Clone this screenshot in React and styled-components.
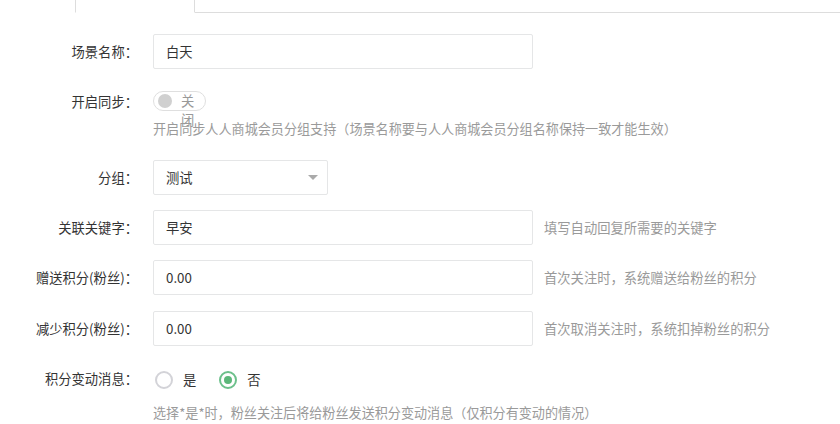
import React from "react";
import styled, { createGlobalStyle } from "styled-components";

const GlobalStyle = createGlobalStyle`
	body {
		margin: 0;
		background: #fff;
		font-family: "Noto Sans CJK SC", "Noto Sans", sans-serif;
		font-size: 13.3px;
		color: #333;
	}
`;

const Page = styled.div`
	width: 840px;
	height: 424px;
	overflow: hidden;
`;

const TabBar = styled.div`
	display: flex;
	height: 12px;
	border-bottom: 1px solid #ddd;
`;

const Tab = styled.div`
	box-sizing: border-box;
	width: ${(p) => p.w}px;
	height: 13px;
	background: #fff;
	border: ${(p) => (p.active ? "1px solid #ddd" : "none")};
	border-top: none;
	border-bottom: ${(p) => (p.active ? "1px solid #fff" : "none")};
`;

const Form = styled.div`
	padding-top: 21px;
`;

const Row = styled.div`
	display: flex;
	margin-bottom: ${(p) => p.mb ?? 15}px;
`;

const Label = styled.div`
	width: 138px;
	flex-shrink: 0;
	margin-right: 15px;
	text-align: right;
	padding-top: 7px;
	line-height: 21px;
	color: #333;
	white-space: nowrap;
`;

const Field = styled.div`
	display: flex;
	flex-direction: ${(p) => (p.column ? "column" : "row")};
	align-items: ${(p) => (p.column ? "flex-start" : "center")};
`;

const Input = styled.input`
	box-sizing: border-box;
	width: ${(p) => p.w || 380}px;
	height: 35px;
	border: 1px solid #e5e6e7;
	border-radius: 2px;
	padding: 0 12px;
	font-family: inherit;
	font-size: 13.3px;
	color: #333;
	outline: none;
`;

const Help = styled.div`
	color: #9a9a9a;
	line-height: 20px;
	font-size: ${(p) => p.fs || 13.3}px;
	margin-left: ${(p) => p.ml || 0}px;
	margin-top: ${(p) => p.mt || 0}px;
	white-space: nowrap;
`;

const Switch = styled.div`
	box-sizing: border-box;
	display: flex;
	align-items: flex-start;
	width: 53px;
	height: 20px;
	margin-top: 7px;
	border: 1px solid #dfdfdf;
	border-radius: 10px;
	padding-left: 4px;
`;

const Knob = styled.span`
	width: 14px;
	height: 14px;
	margin-top: 2px;
	border-radius: 50%;
	background: #d0d0d0;
	flex-shrink: 0;
`;

const SwitchText = styled.span`
	width: 14px;
	margin-left: 9px;
	margin-top: -1px;
	line-height: 19px;
	color: #999;
	word-break: break-all;
`;

const SelectBox = styled.div`
	box-sizing: border-box;
	display: flex;
	align-items: center;
	justify-content: space-between;
	width: 175px;
	height: 35px;
	border: 1px solid #e5e6e7;
	border-radius: 2px;
	padding: 0 9px 0 12px;
	color: #333;
`;

const Caret = styled.span`
	width: 0;
	height: 0;
	border-left: 5px solid transparent;
	border-right: 5px solid transparent;
	border-top: 5px solid #aaa;
`;

const RadioGroup = styled.div`
	display: flex;
	align-items: center;
	height: 21px;
	margin-top: 8px;
	padding-left: 2px;
`;

const RadioItem = styled.label`
	display: flex;
	align-items: center;
	margin-right: 23px;
`;

const Circle = styled.span`
	box-sizing: border-box;
	display: flex;
	align-items: center;
	justify-content: center;
	width: 18px;
	height: 18px;
	border-radius: 50%;
	border: 2px solid ${(p) => (p.checked ? "#6cc08b" : "#d3d3d8")};
	margin-right: 10px;
	&::after {
		content: "";
		display: ${(p) => (p.checked ? "block" : "none")};
		width: 8px;
		height: 8px;
		border-radius: 50%;
		background: #5cb77a;
	}
`;

function App() {
	return (
		<Page>
			<GlobalStyle />
			<TabBar>
				<Tab w={75} />
				<Tab w={120} active />
			</TabBar>
			<Form>
				<Row>
					<Label>场景名称：</Label>
					<Field>
						<Input defaultValue="白天" />
					</Field>
				</Row>
				<Row mb={21}>
					<Label>开启同步：</Label>
					<Field column>
						<Switch>
							<Knob />
							<SwitchText>关闭</SwitchText>
						</Switch>
						<Help mt={8} fs={13.1}>
							开启同步人人商城会员分组支持（场景名称要与人人商城会员分组名称保持一致才能生效）
						</Help>
					</Field>
				</Row>
				<Row mb={15}>
					<Label>分组：</Label>
					<Field>
						<SelectBox>
							<span>测试</span>
							<Caret />
						</SelectBox>
					</Field>
				</Row>
				<Row mb={15}>
					<Label>关联关键字：</Label>
					<Field>
						<Input defaultValue="早安" />
						<Help ml={11}>填写自动回复所需要的关键字</Help>
					</Field>
				</Row>
				<Row mb={16}>
					<Label>赠送积分(粉丝)：</Label>
					<Field>
						<Input defaultValue="0.00" />
						<Help ml={11}>首次关注时，系统赠送给粉丝的积分</Help>
					</Field>
				</Row>
				<Row mb={15}>
					<Label>减少积分(粉丝)：</Label>
					<Field>
						<Input defaultValue="0.00" />
						<Help ml={11}>首次取消关注时，系统扣掉粉丝的积分</Help>
					</Field>
				</Row>
				<Row>
					<Label>积分变动消息：</Label>
					<Field column>
						<RadioGroup>
							<RadioItem>
								<Circle />是
							</RadioItem>
							<RadioItem>
								<Circle checked />否
							</RadioItem>
						</RadioGroup>
						<Help mt={13} fs={13.1}>
							选择*是*时，粉丝关注后将给粉丝发送积分变动消息（仅积分有变动的情况）
						</Help>
					</Field>
				</Row>
			</Form>
		</Page>
	);
}

export default App;
